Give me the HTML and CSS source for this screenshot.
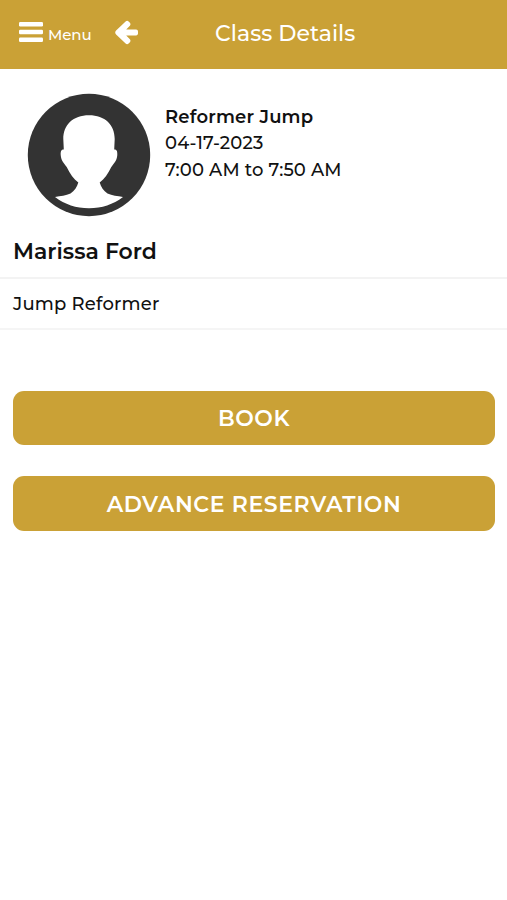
FILE: index.html
```html
<!DOCTYPE html>
<html lang="en">
<head>
<meta charset="utf-8">
<title>Class Details</title>
<link rel="stylesheet" href="styles.css">
</head>
<body>
<header class="topbar">
  <div class="nav">
    <svg class="menu-icon" width="24" height="21" viewBox="0 0 24 21"><g fill="#fff"><rect width="24" height="4.400" rx="1.200"/><rect y="7.800" width="24" height="4.400" rx="1.200"/><rect y="15.600" width="24" height="4.400" rx="1.200"/></g></svg>
    <span class="menu-label">Menu</span>
    <svg class="back-icon" width="24" height="25" viewBox="0 0 24 25"><path d="M0.200 12.500c0-.8.300-1.500.9-2L10.600 1.400c.9-.8 2.200-.8 3 0l1.300 1.300c.8.900.8 2.100 0 3L11.200 9.600h9.900c1.100 0 1.900.8 1.900 1.900v2c0 1.100-.8 1.900-1.900 1.900h-9.900l3.700 3.900c.8.900.8 2.100 0 3l-1.300 1.300c-.8.800-2.100.8-3 0L1.100 14.500c-.6-.5-.9-1.200-.9-2Z" fill="#fff"/></svg>
  </div>
  <h1 class="title">Class Details</h1>
</header>
<main>
  <section class="summary">
    <svg class="avatar" width="124" height="124" viewBox="0 0 124 124"><circle cx="62" cy="62" r="61.200" fill="#333"/><path d="M62 22.300C46 22.300 36.300 32 36.300 46L36.800 56.500C34.200 56.500 33.600 58 33.700 62C34.200 68 36.500 69.500 39.700 74C43 80.500 46.500 86 51.300 89.500C50 94 47.500 98 43.500 100.500C39 102.500 33.500 103 28 104C38 111.500 49 115.300 62 115.300S86 111.500 96 104C90.500 103 85 102.500 80.500 100.500C76.500 98 74 94 72.700 89.500C77.500 86 81 80.500 84.300 74C87.500 69.500 89.800 68 90.300 62C90.400 58 89.800 56.500 87.200 56.500L87.700 46C87.700 32 78 22.300 62 22.300Z" fill="#fff"/></svg>
    <div class="info">
      <div class="class-name">Reformer Jump</div>
      <div class="date">04-17-2023</div>
      <div class="time">7:00 AM to 7:50 AM</div>
    </div>
  </section>
  <h2 class="teacher">Marissa Ford</h2>
  <p class="description">Jump Reformer</p>
  <div class="actions">
    <button class="btn">BOOK</button>
    <button class="btn">ADVANCE RESERVATION</button>
  </div>
</main>
</body>
</html>
```
FILE: styles.css
```css
* { box-sizing: border-box; margin: 0; }
body { min-height: 900px; background: #fff; color: #111; font-family: Montserrat, Inter, sans-serif; font-weight: 500; }
.topbar { display: grid; grid-template-columns: 215px 1fr; height: 69px; background: #caa136; color: #fff; white-space: nowrap; }
.nav { display: flex; align-items: flex-start; padding: 22px 0 0 19px; }
.nav svg { flex-shrink: 0; }
.menu-label { width: 72px; padding-left: 5px; margin-top: 3px; font-size: 15px; line-height: 20px; letter-spacing: -.1px; }
.back-icon { margin-top: -2px; }
.title { padding-top: 20px; font-size: 22px; line-height: 28px; font-weight: 500; letter-spacing: .05px; }
.summary { display: flex; height: 158px; padding: 24px 0 0 27px; }
.info { padding: 11px 0 0 14px; font-size: 18px; line-height: 26px; white-space: nowrap; }
.class-name { font-weight: 600; letter-spacing: .2px; }
.date { letter-spacing: .15px; }
.time { line-height: 28px; letter-spacing: .15px; }
.teacher { height: 52px; padding: 11px 13px 0; border-bottom: 2px solid #f3f3f3; font-size: 22px; line-height: 28px; font-weight: 600; }
.description { height: 51px; padding: 12px 13px 0; border-bottom: 2px solid #f5f5f5; font-size: 18px; line-height: 26px; letter-spacing: .2px; }
.actions { display: grid; gap: 31px; padding: 61px 12px 0 13px; }
.btn { height: 54.400px; padding: 2px 0 0; border: 0; border-radius: 11px; background: #caa136; color: #fff; font-family: inherit; font-size: 22px; line-height: 28px; font-weight: 600; letter-spacing: .6px; }
```
